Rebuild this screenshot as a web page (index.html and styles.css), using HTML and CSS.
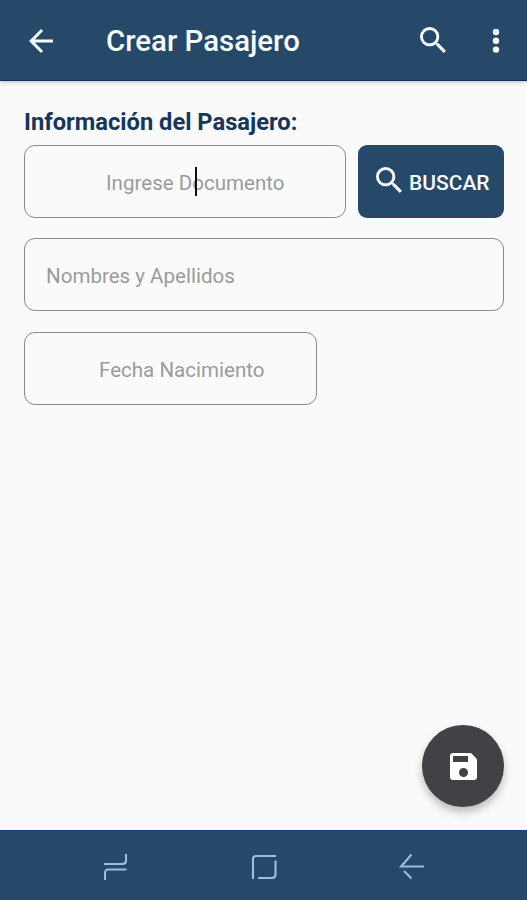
FILE: index.html
```html
<!DOCTYPE html>
<html lang="es">
<head>
<meta charset="utf-8">
<title>Crear Pasajero</title>
<link rel="stylesheet" href="styles.css">
</head>
<body>
<div class="screen">
  <header class="appbar">
    <svg class="back" viewBox="4 4 16 16"><path d="M20 11H7.83l5.59-5.59L12 4l-8 8 8 8 1.41-1.41L7.83 13H20v-2z"/></svg>
    <h1 class="title">Crear Pasajero</h1>
    <svg class="search" viewBox="3 3 17.5 17.5"><path d="M15.5 14h-.79l-.28-.27A6.47 6.47 0 0 0 16 9.5 6.5 6.5 0 1 0 9.5 16c1.61 0 3.09-.59 4.23-1.57l.27.28v.79l5 4.99L20.49 19l-4.99-5zm-6 0C7.01 14 5 11.99 5 9.5S7.01 5 9.5 5 14 7.01 14 9.5 11.99 14 9.5 14z"/></svg>
    <svg class="more" viewBox="0 0 8 26"><circle cx="4" cy="4" r="3.2"/><circle cx="4" cy="12.8" r="3.2"/><circle cx="4" cy="21.6" r="3.2"/></svg>
  </header>
  <main class="content">
    <h2 class="heading">Información del Pasajero:</h2>
    <div class="row">
      <div class="field document"><span class="hint-document">Ingrese Documento</span><i class="caret"></i></div>
      <button class="button">
        <svg class="button-icon" viewBox="3 3 17.5 17.5"><path d="M15.5 14h-.79l-.28-.27A6.47 6.47 0 0 0 16 9.5 6.5 6.5 0 1 0 9.5 16c1.61 0 3.09-.59 4.23-1.57l.27.28v.79l5 4.99L20.49 19l-4.99-5zm-6 0C7.01 14 5 11.99 5 9.5S7.01 5 9.5 5 14 7.01 14 9.5 11.99 14 9.5 14z"/></svg>
        <span class="button-label">BUSCAR</span>
      </button>
    </div>
    <div class="field names"><span class="hint-names">Nombres y Apellidos</span></div>
    <div class="field birth"><span class="hint-birth">Fecha Nacimiento</span></div>
    <button class="fab" aria-label="Guardar"><svg class="save" viewBox="3 3 18 18"><path d="M17 3H5a2 2 0 0 0-2 2v14a2 2 0 0 0 2 2h14a2 2 0 0 0 2-2V7l-4-4zm-5 16a3 3 0 1 1 0-6 3 3 0 0 1 0 6zm3-10H5V5h10v4z"/></svg></button>
  </main>
  <nav class="navbar">
    <svg class="nav-icon recents" viewBox="0 0 26 28"><path d="M1 11H19.500Q23 11 23 7.500V1M23.500 16.500H5.500Q2 16.500 2 20V27"/></svg>
    <svg class="nav-icon home" viewBox="0 0 26 28"><path d="M2 26V6Q2 3 5 3H25M7 25H21Q24.500 25 24.500 21.500V7.500"/></svg>
    <svg class="nav-icon return" viewBox="0 0 26 28"><path d="M12.500 1.500L2 13.500H25M5 18L12.500 25.500"/></svg>
  </nav>
</div>
</body>
</html>
```
FILE: styles.css
```css
* { box-sizing: border-box; }
body { margin: 0; font-family: Roboto, sans-serif; }
.screen { width: 527px; height: 900px; display: flex; flex-direction: column; background: #fafafa; overflow: hidden; }
svg { display: block; flex: none; }
.appbar { height: 81px; flex: none; display: flex; align-items: center; padding: 1px 27px 0 29px; background: #264869; border-bottom: 1px solid #12315a; box-shadow: 0 1px 4px rgba(0, 0, 0, .25); fill: #f5fcff; }
.back { width: 24px; height: 24px; }
.title { margin: 0 0 0 53px; width: 260px; font-size: 29.400px; line-height: 36px; font-weight: 500; color: #f5fcff; white-space: nowrap; }
.search { width: 26px; height: 26px; margin: -1px 0 0 54px; }
.more { width: 8px; height: 26px; margin-left: auto; }
.content { flex: 1; position: relative; padding: 26px 23px 0 24px; }
.heading { margin: 0; height: 38px; font-size: 23.700px; line-height: 30px; font-weight: 700; color: #15355a; white-space: nowrap; }
.row { display: flex; gap: 12px; }
.field { height: 73px; display: flex; align-items: center; border: 1.500px solid #8c8c8c; border-radius: 11px; font-size: 20.550px; color: #9b9b9b; white-space: nowrap; }
.document { position: relative; width: 322px; padding-left: 81px; padding-top: 2px; }
.caret { position: absolute; left: 170px; top: 21px; width: 2px; height: 29px; background: #111; }
.button { width: 146px; height: 73px; display: flex; align-items: center; padding: 0 0 0 18px; border: 0; border-radius: 9px; background: #264869; color: #f5fcff; fill: #f5fcff; font-family: inherit; }
.button-icon { width: 26px; height: 26px; margin-top: -3px; }
.button-label { margin: 2px 0 0 7px; font-size: 21px; font-weight: 500; }
.names { width: 480px; margin-top: 20px; padding: 2px 0 0 21px; }
.birth { width: 293px; margin-top: 21px; padding: 2px 0 0 74px; }
.fab { position: absolute; right: 23px; bottom: 23px; width: 82px; height: 82px; display: flex; align-items: center; justify-content: center; padding: 0; border: 0; border-radius: 50%; background: #424145; box-shadow: 0 5px 9px rgba(0, 0, 0, .25); fill: #fff; }
.save { width: 27px; height: 27px; }
.navbar { height: 70px; flex: none; display: flex; align-items: center; gap: 122px; padding: 2px 0 0 103px; background: #264869; border-top: 1px solid #1c4069; }
.nav-icon { width: 26px; height: 28px; fill: none; stroke: #9bbfdf; stroke-width: 2.100; }
```
